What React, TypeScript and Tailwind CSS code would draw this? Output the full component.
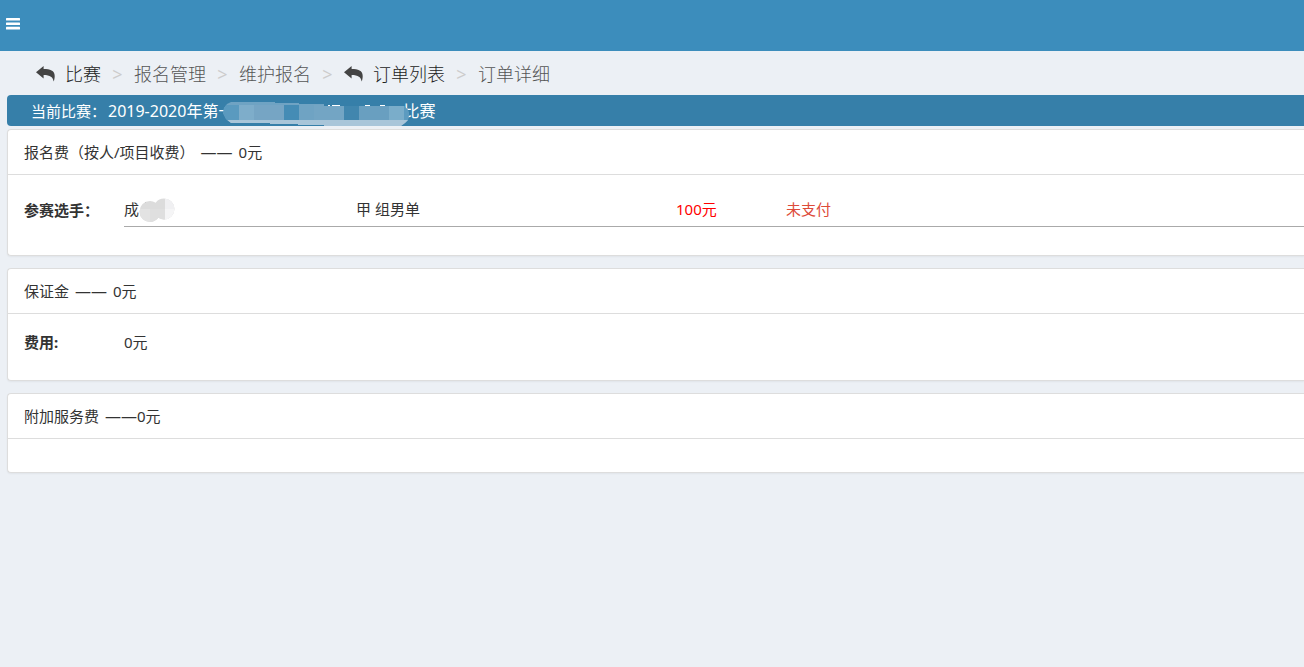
import * as React from 'react'

type Crumb = {
  name: string
  path?: string
}

const crumbs: Crumb[] = [
  { name: '比赛', path: '#matches' },
  { name: '报名管理' },
  { name: '维护报名' },
  { name: '订单列表', path: '#orders' },
  { name: '订单详细' },
]

const players = [{ name: '成', group: '甲 组男单', fee: '100元', status: '未支付' }]

const BarsIcon = () => (
  <svg viewBox="0 0 14 12" className="block h-3 w-3.5" fill="currentColor" aria-hidden="true">
    <rect width="14" height="2.6" rx="0.5" />
    <rect y="4.4" width="14" height="2.6" rx="0.5" />
    <rect y="8.8" width="14" height="2.6" rx="0.5" />
  </svg>
)

const BackIcon = () => (
  <svg viewBox="0 0 19 16" className="h-4 w-[19px]" fill="#444" aria-hidden="true">
    <path d="M0 6.2 7.6 0v3.1C14 3.1 18.7 4.6 18.7 10c0 2.2-.4 4.2-1.1 5.6C17.2 11.2 14.2 9 7.6 9v3.4z" />
  </svg>
)

// Mosaic over the part of the match name that is kept private
const NameMosaic = () => (
  <svg
    viewBox="0 0 186 24"
    className="absolute top-0.5 -left-[11px] h-6 w-[186px]"
    aria-hidden="true"
  >
    <clipPath id="mosaic">
      <path d="M8 0h44v1h24v1h25v2h80l4 4 1 4-1 6-3 3-4 3h-77v-1h-26v-1H47v-1H8l-5-4-3-6 1-5 3-4z" />
    </clipPath>
    <g clipPath="url(#mosaic)">
      <rect width="186" height="24" fill="#6fa3c3" />
      <rect x="0" y="3" width="16" height="15" fill="#5a9abf" />
      <rect x="16" y="3" width="15" height="15" fill="#7eadca" />
      <rect x="31" y="3" width="30" height="15" fill="#76a5c4" />
      <rect x="61" y="3" width="15" height="15" fill="#458cb5" />
      <rect x="91" y="3" width="30" height="15" fill="#73a5c4" />
      <rect x="121" y="3" width="15" height="15" fill="#4186ae" />
      <rect x="136" y="3" width="30" height="15" fill="#699fc0" />
      <rect x="166" y="3" width="15" height="15" fill="#7aadca" />
      <rect x="181" y="3" width="5" height="15" fill="#5c9bc0" />
      <rect y="18" width="186" height="6" fill="#a8c5d9" />
    </g>
    <path d="M105 3.5h2M109 3.5h8M142 3.5h5M157 3.5h5" stroke="#fff" strokeWidth="1" />
  </svg>
)

const PlayerMosaic = () => (
  <svg viewBox="0 0 36 24" className="h-6 w-9" aria-hidden="true">
    <path d="M4.5 6.5 7 4M6 7v4" stroke="#555" fill="none" />
    <clipPath id="blob">
      <circle cx="11" cy="13.5" r="10.5" />
      <circle cx="25" cy="11" r="10.5" />
    </clipPath>
    <g clipPath="url(#blob)">
      <rect width="36" height="24" fill="#dcdcdc" />
      <rect y="11" width="11" height="13" fill="#e3e3e3" />
      <rect x="11" y="11" width="15" height="13" fill="#dfdfdf" />
      <rect x="26" width="10" height="11" fill="#f0f0f2" />
      <rect x="26" y="11" width="10" height="13" fill="#f5f5f6" />
    </g>
  </svg>
)

const Breadcrumb: React.FunctionComponent = () => (
  <nav className="px-9 pt-[9px] pb-[7px] text-lg font-light text-[#555]">
    <ol className="flex items-center">
      {crumbs.map((crumb, i) => (
        <li key={crumb.name} className="flex items-center">
          {i > 0 && <span className="w-[33px] text-center font-normal text-[#ccc]">&gt;</span>}
          {crumb.path ? (
            <a href={crumb.path} className="flex items-center gap-2.5 text-[#222]">
              <BackIcon />
              {crumb.name}
            </a>
          ) : (
            crumb.name
          )}
        </li>
      ))}
    </ol>
  </nav>
)

type PanelProps = {
  label: string
  amount: string
  tight?: boolean
  children?: React.ReactNode
}

const Panel = ({ label, amount, tight = false, children }: PanelProps) => (
  <section className="rounded-l border border-r-0 border-[#ddd] bg-white shadow-xs">
    <h2 className="flex gap-1.5 border-b border-[#ddd] px-4 py-[11px]">
      <span>{label}</span>
      <span className={tight ? 'flex' : 'flex gap-1.5'}>
        <span className="text-base leading-[22px]">——</span>
        <span>{amount}</span>
      </span>
    </h2>
    {children}
  </section>
)

const App: React.FunctionComponent = () => (
  <div className="min-h-screen overflow-x-hidden bg-[#ecf0f5] font-['Noto_Sans','Noto_Sans_CJK_SC',sans-serif] text-[15px] leading-[22px] text-[#333]">
    <header className="flex bg-[#3c8dbc] px-1.5 pt-[18px] pb-[21px] text-white">
      <button aria-label="菜单">
        <BarsIcon />
      </button>
    </header>

    <Breadcrumb />

    <main className="pl-[7px]">
      <div className="flex gap-0.5 rounded-l bg-[#367fa9] px-6 pt-[5px] pb-[3px] leading-[23px] text-white">
        <span>当前比赛：</span>
        <span className="flex text-base leading-[23px]">
          2019-2020年第一
          <span className="relative w-[169px]">
            <NameMosaic />
          </span>
          比赛
        </span>
      </div>

      <div className="mt-[3px] flex flex-col gap-3">
        <Panel label="报名费（按人/项目收费）" amount="0元">
          <div className="flex pt-[23px] pb-7 pl-4">
            <b className="w-[100px] shrink-0 pt-px">参赛选手：</b>
            <table className="w-full table-fixed text-left">
              <tbody>
                {players.map((player) => (
                  <tr key={player.name} className="border-b border-[#aaa] align-top">
                    <td className="w-[232px]">
                      <div className="flex h-7">
                        {player.name}
                        <PlayerMosaic />
                      </div>
                    </td>
                    <td className="w-80">{player.group}</td>
                    <td className="w-[110px] text-[#f00]">{player.fee}</td>
                    <td className="text-[#dd4b39]">{player.status}</td>
                  </tr>
                ))}
              </tbody>
            </table>
          </div>
        </Panel>

        <Panel label="保证金" amount="0元">
          <div className="flex px-4 pt-[17px] pb-[27px]">
            <b className="w-[100px]">费用:</b>
            <span>0元</span>
          </div>
        </Panel>

        <Panel label="附加服务费" amount="0元" tight>
          <div className="h-[33px]" />
        </Panel>
      </div>
    </main>
  </div>
)

export default App
